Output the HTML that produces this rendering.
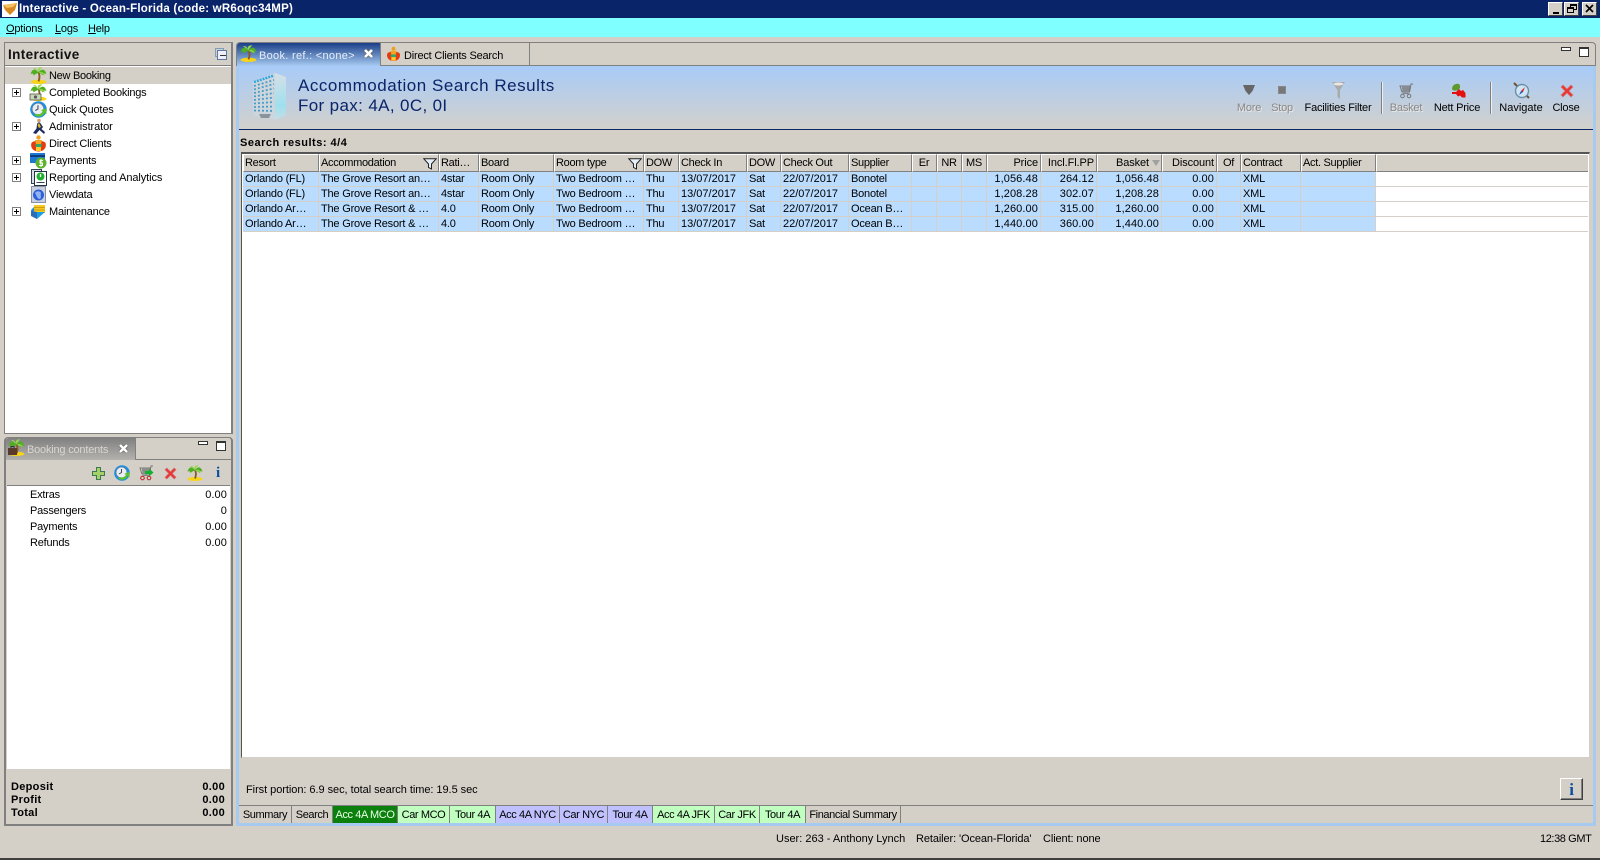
<!DOCTYPE html>
<html><head><meta charset="utf-8"><title>Interactive</title>
<style>
html,body{margin:0;padding:0;width:1600px;height:860px;overflow:hidden;background:#d4d0c8}
body{position:relative;font:11px/13px "Liberation Sans",sans-serif;color:#000}
.a{position:absolute;box-sizing:border-box}
.t{position:absolute;white-space:nowrap;line-height:13px;margin-top:1px;letter-spacing:-.2px}
.v{letter-spacing:.1px}
.bd{font-weight:bold;letter-spacing:.3px}
.r{text-align:right}
.c{text-align:center}
.ico{position:absolute;overflow:visible}
.tab{position:absolute;top:806px;height:17px;line-height:18px;letter-spacing:-.4px;text-align:center;border-right:1px solid #808080;box-sizing:border-box;white-space:nowrap}
.g{background:#c0ffc0}.b{background:#c0c0ff}
.exp{position:absolute;left:12px;width:9px;height:9px;border:1px solid #808080;box-sizing:border-box;background:#fff}
.exp:before{content:"";position:absolute;left:1px;top:3px;width:5px;height:1px;background:#000}
.exp:after{content:"";position:absolute;left:3px;top:1px;width:1px;height:5px;background:#000}
table{border-collapse:separate;border-spacing:0;table-layout:fixed;position:absolute;left:243px;top:154px;width:1133px}
th{height:18px;box-sizing:border-box;padding:1px 2px 0 1px;font-weight:normal;letter-spacing:-.3px;text-align:left;background:#d4d0c8;border-top:1px solid #fff;border-left:1px solid #fff;border-right:1px solid #808080;border-bottom:1px solid #808080;overflow:hidden;white-space:nowrap}
td{height:15px;box-sizing:border-box;padding:1px 2px 0 2px;letter-spacing:-.2px;background:#b9dcff;border-right:1px solid #d4d0c8;border-bottom:1px solid #d4d0c8;overflow:hidden;white-space:nowrap}
td:nth-child(7),td:nth-child(9){letter-spacing:0}
th.n{letter-spacing:-.1px}
td.n{letter-spacing:.1px;text-align:right}
th.n{text-align:right}
</style></head><body>
<svg width="0" height="0" style="position:absolute">
<defs>
<symbol id="palm" viewBox="0 0 16 16"><ellipse cx="8" cy="14" rx="7.500" ry="2" fill="#f7d417"/><path d="M8 13.500C9.500 10 9 7 8 4.500" stroke="#8a5a20" stroke-width="1.800" fill="none"/><path d="M8 5.500C5 .5 1.500 2 .5 7 2 5.500 3 6 3.500 8 5 6.500 6.500 6 8 5.500ZM8 5.500C11 .5 14.500 2 15.500 7 14 5.500 13 6 12.500 8 11 6.500 9.500 6 8 5.500Z" fill="#4fae22"/><path d="M8 5C6.500 1.500 8.500 0 11.500 .5 10 2 9 3 8 5ZM8 5C7 2.500 5.500 .5 3 1 5 2.500 6.500 3.500 8 5ZM8 5.500C11 4 13 5 14 8 12 6.500 10 6 8 5.500Z" fill="#93d84e"/></symbol>
<symbol id="clock" viewBox="0 0 16 16"><circle cx="8" cy="8" r="7.800" fill="#1d8fe0"/><circle cx="7.500" cy="7.500" r="5.400" fill="#e8eef4" stroke="#6a7a90" stroke-width=".6"/><path d="M7.500 4V7.500L5 9" stroke="#445" stroke-width="1" fill="none"/><path d="M4 13C7 16 12 15 13.500 11L15.500 12.500 15.500 7 10.500 8.500 12 10C10.500 12.500 8 13 6 12Z" fill="#5cc02a"/></symbol>
<symbol id="x" viewBox="0 0 14 14"><path d="M3 1 7 5 11 1 13 3 9 7 13 11 11 13 7 9 3 13 1 11 5 7 1 3Z" fill="#ee3333" stroke="#c98080" stroke-width=".7"/></symbol>
<symbol id="funnel" viewBox="0 0 14 12"><path d="M.7.7H13.300L8.500 6V11L5.500 9.500V6Z" fill="#e6f0fa" stroke="#222" stroke-width="1"/></symbol>
<symbol id="cart" viewBox="0 0 16 16"><path d="M15 1H13L11.500 9H4L2 3H13M4 5H13M4.500 7H12.500M5 3V9M7 3V9M9 3V9M11 3V9" stroke="#777" stroke-width="1" fill="none"/><circle cx="4.500" cy="13" r="1.800" fill="none" stroke="#777"/><circle cx="11" cy="13" r="1.800" fill="none" stroke="#777"/><path d="M4.500 11C7 10 9 10 11 11" stroke="#777" fill="none"/></symbol>
<symbol id="tx" viewBox="0 0 11 11"><path d="M2 2 9 9M9 2 2 9" stroke="#666" stroke-width="4"/><path d="M2 2 9 9M9 2 2 9" stroke="#fff" stroke-width="2.600"/></symbol>
<symbol id="client" viewBox="0 0 17 17"><circle cx="8.500" cy="2.500" r="2.200" fill="#f0a020"/><path d="M1.500 8C3 5 14 5 15.500 8 17 12 14 16.500 8.500 16.500 3 16.500 0 12 1.500 8Z" fill="#e83a10"/><path d="M5 5H12L11 9H6Z" fill="#f6a623"/><rect x="5.500" y="9" width="6" height="3" fill="#2fa868"/><rect x="6" y="12" width="5" height="4" fill="#fc3"/></symbol>
<linearGradient id="hs" x1="0" y1="0" x2="0" y2="1"><stop offset="0" stop-color="#d6dfe6"/><stop offset=".7" stop-color="#9ee0ee"/><stop offset="1" stop-color="#c6dde4"/></linearGradient>
</defs>
</svg>

<!-- Title bar -->
<div class="a" style="left:0;top:0;width:1600px;height:18px;background:#0a246a"></div>
<div class="a" style="left:2px;top:1px;width:16px;height:16px;background:#fff"></div>
<svg class="ico" style="left:2px;top:2px" width="16" height="14" viewBox="0 0 16 14"><path d="M1 3 15 1 13 8 8 13 3 8Z" fill="#d88a20"/><path d="M1 3 15 1 11 5 5 6Z" fill="#f4c060"/></svg>
<div class="t" style="left:19px;top:2px;color:#fff;font-weight:bold;font-size:11.500px;letter-spacing:.22px">Interactive - Ocean-Florida (code: wR6oqc34MP)</div>
<div class="a" style="left:1548px;top:2px;width:15px;height:14px;background:#d4d0c8;border:1px solid;border-color:#fff #404040 #404040 #fff"><div class="a" style="left:4px;top:9px;width:6px;height:2px;background:#000"></div></div>
<div class="a" style="left:1564px;top:2px;width:15px;height:14px;background:#d4d0c8;border:1px solid;border-color:#fff #404040 #404040 #fff"><div class="a" style="left:5px;top:1px;width:7px;height:6px;border:1px solid #000;border-top-width:2px"></div><div class="a" style="left:2px;top:4px;width:7px;height:6px;border:1px solid #000;border-top-width:2px;background:#d4d0c8"></div></div>
<div class="a" style="left:1582px;top:2px;width:15px;height:14px;background:#d4d0c8;border:1px solid;border-color:#fff #404040 #404040 #fff"><svg class="ico" style="left:2px;top:1px" width="9" height="9" viewBox="0 0 9 9"><path d="M1 1 8 8M8 1 1 8" stroke="#000" stroke-width="1.700"/></svg></div>

<!-- Menu -->
<div class="a" style="left:0;top:18px;width:1600px;height:19px;background:#7fffff"></div>
<div class="t" style="left:6px;top:22px"><u>O</u>ptions</div>
<div class="t" style="left:55px;top:22px"><u>L</u>ogs</div>
<div class="t" style="left:88px;top:22px"><u>H</u>elp</div>

<!-- Left top panel -->
<div class="a" style="left:4px;top:42px;width:229px;height:392px;background:#fff;border:1px solid #808080;border-width:1px 2px 1px 1px"></div>
<div class="a" style="left:5px;top:43px;width:226px;height:23px;background:#d4d0c8;border-bottom:1px solid #808080"></div>
<div class="t" style="left:8px;top:47px;margin-top:0;font-weight:bold;font-size:13.500px;line-height:16px;color:#111;letter-spacing:.37px">Interactive</div>
<div class="a" style="left:215px;top:48px;width:9px;height:9px;border:1px solid #7f9db9;background:#d4d0c8"></div>
<div class="a" style="left:217px;top:50px;width:10px;height:10px;border:1px solid #5a7aa0;background:#eef"><div class="a" style="left:2px;top:4px;width:6px;height:1px;background:#333"></div></div>
<div class="a" style="left:5px;top:67px;width:226px;height:17px;background:#d4d0c8"></div>

<svg class="ico" style="left:30px;top:67px" width="17" height="17"><use href="#palm"/></svg>
<svg class="ico" style="left:30px;top:84px" width="17" height="17"><use href="#palm"/><rect x="0" y="10" width="11" height="6" fill="#c8d8b0" stroke="#444" stroke-width=".7"/><circle cx="5.500" cy="13" r="1.600" fill="#556"/></svg>
<svg class="ico" style="left:30px;top:101px" width="17" height="17"><use href="#clock"/></svg>
<svg class="ico" style="left:32px;top:118px" width="15" height="17" viewBox="0 0 15 17"><circle cx="7" cy="2.500" r="1.800" fill="#caa070"/><path d="M6 4.500 8 4.500 11 9 9.500 11 13 14 12 16 7.500 12 4 16 1 15 4.500 10.500 5 6Z" fill="#1c2c60"/><path d="M7 5 9 9 7 10 5.500 7Z" fill="#e0c020"/></svg>
<svg class="ico" style="left:30px;top:135px" width="17" height="17"><use href="#client"/></svg>
<svg class="ico" style="left:30px;top:152px" width="17" height="17" viewBox="0 0 17 17"><rect x="0" y="1" width="15" height="10" fill="#1f78d0"/><rect x="0" y="3" width="15" height="2" fill="#0b3e80"/><circle cx="11" cy="11" r="5.500" fill="#5cb52b"/><path d="M13 8.500H10V11H12.500V13.500H9M11 7V15" stroke="#fff" stroke-width="1" fill="none"/></svg>
<svg class="ico" style="left:31px;top:169px" width="16" height="17" viewBox="0 0 16 17"><rect x=".5" y=".5" width="10" height="14" fill="#d8dee8" stroke="#345"/><rect x="3.500" y="2.500" width="12" height="14" fill="#fff" stroke="#234"/><circle cx="9.500" cy="7.500" r="4" fill="#20b030"/><path d="M9.500 5V8" stroke="#fff" stroke-width="1.300"/><path d="M5.500 13.500H13.500" stroke="#345"/></svg>
<svg class="ico" style="left:31px;top:186px" width="15" height="17" viewBox="0 0 15 17"><rect x=".5" y=".5" width="14" height="16" fill="#c8cfe0" stroke="#8890a8"/><circle cx="7.500" cy="9" r="5.500" fill="#2e5fd8"/><path d="M4 7C6 4.500 9 5 10 7 9 9 11 11 9 13 6 13 6 10 4 7Z" fill="#90b4f0"/></svg>
<svg class="ico" style="left:30px;top:203px" width="17" height="17" viewBox="0 0 17 17"><path d="M1 7 5 3H15L13 9 7 15 3 14Z" fill="#1c8ad8"/><path d="M4 2H15V10H4Z" fill="#f4c81c"/><path d="M4 4.500H15M4 7H15" stroke="#c08a10" stroke-width=".8"/><path d="M1 8 7 9V16L1 13Z" fill="#2c6cb8"/><path d="M7 9 15 9 7 16Z" fill="#18a0e0"/></svg>

<div class="t" style="left:49px;top:69px;letter-spacing:-.28px">New Booking</div>
<div class="t" style="left:49px;top:86px;letter-spacing:-.23px">Completed Bookings</div>
<div class="t" style="left:49px;top:103px;letter-spacing:-.17px">Quick Quotes</div>
<div class="t" style="left:49px;top:120px;letter-spacing:-.08px">Administrator</div>
<div class="t" style="left:49px;top:137px">Direct Clients</div>
<div class="t" style="left:49px;top:154px">Payments</div>
<div class="t" style="left:49px;top:171px;letter-spacing:-.1px">Reporting and Analytics</div>
<div class="t" style="left:49px;top:188px">Viewdata</div>
<div class="t" style="left:49px;top:205px">Maintenance</div>
<div class="exp" style="top:88px"></div>
<div class="exp" style="top:122px"></div>
<div class="exp" style="top:156px"></div>
<div class="exp" style="top:173px"></div>
<div class="exp" style="top:207px"></div>

<!-- Booking contents panel -->
<div class="a" style="left:4px;top:437px;width:229px;height:389px;background:#d4d0c8;border:1px solid #808080;border-width:1px 2px 2px 2px;border-radius:4px 4px 0 0"></div>
<div class="a" style="left:6px;top:438px;width:130px;height:22px;background:linear-gradient(#808080,#b4b2ae);border-right:1px solid #808080;border-radius:3px 0 0 0"></div>
<div class="a" style="left:136px;top:459px;width:96px;height:1px;background:#808080"></div>
<svg class="ico" style="left:8px;top:439px" width="17" height="17"><use href="#palm"/><rect x="0" y="9" width="9" height="7" fill="#5a3a2a"/><path d="M3 9V7.500H6V9" stroke="#333" fill="none"/></svg>
<div class="t" style="left:27px;top:443px;color:#d8d6d0">Booking contents</div>
<svg class="ico" style="left:118px;top:443px" width="11" height="11"><use href="#tx"/></svg>
<div class="a" style="left:198px;top:441px;width:10px;height:4px;border:1px solid #333;background:#fff"></div>
<div class="a" style="left:216px;top:441px;width:10px;height:10px;border:1px solid #333;border-top-width:2px;background:#fff"></div>
<div class="a" style="left:7px;top:462px;width:223px;height:24px;background:#d4d0c8;border-bottom:1px solid #808080"></div>
<svg class="ico" style="left:92px;top:467px" width="13" height="13" viewBox="0 0 13 13"><path d="M4.500 .5H8.500V4.500H12.500V8.500H8.500V12.500H4.500V8.500H.5V4.500H4.500Z" fill="#a8d068" stroke="#3a7a50"/></svg>
<svg class="ico" style="left:114px;top:465px" width="16" height="16"><use href="#clock"/></svg>
<svg class="ico" style="left:138px;top:465px" width="16" height="16"><use href="#cart"/><path d="M7 6H11V3.500L15.500 7.500 11 11.500V9H7Z" fill="#10b030"/><circle cx="4.500" cy="13" r="1.800" fill="none" stroke="#d03030"/><circle cx="11" cy="13" r="1.800" fill="none" stroke="#d03030"/></svg>
<svg class="ico" style="left:164px;top:467px" width="13" height="13"><use href="#x"/></svg>
<svg class="ico" style="left:187px;top:465px" width="16" height="16"><use href="#palm"/></svg>
<div class="t" style="left:214px;top:465px;margin-top:0;width:8px;text-align:center;font:bold 15px/16px 'Liberation Serif',serif;color:#0b4fa0">i</div>
<div class="a" style="left:7px;top:486px;width:223px;height:283px;background:#fff"></div>
<div class="t" style="left:30px;top:488px">Extras</div><div class="t r v" style="right:1373px;top:488px">0.00</div>
<div class="t" style="left:30px;top:504px">Passengers</div><div class="t r v" style="right:1373px;top:504px">0</div>
<div class="t" style="left:30px;top:520px">Payments</div><div class="t r v" style="right:1373px;top:520px">0.00</div>
<div class="t" style="left:30px;top:536px">Refunds</div><div class="t r v" style="right:1373px;top:536px">0.00</div>
<div class="t bd" style="left:11px;top:780px">Deposit</div><div class="t r bd" style="right:1375px;top:780px">0.00</div>
<div class="t bd" style="left:11px;top:793px">Profit</div><div class="t r bd" style="right:1375px;top:793px">0.00</div>
<div class="t bd" style="left:11px;top:806px">Total</div><div class="t r bd" style="right:1375px;top:806px">0.00</div>

<!-- Main panel -->
<div class="a" style="left:236px;top:42px;width:1360px;height:784px;background:#d4d0c8;border:1px solid #808080;border-radius:4px 4px 0 0;border-bottom:0"></div>
<div class="a" style="left:236px;top:66px;width:3px;height:760px;background:#a6caf0"></div>
<div class="a" style="left:1593px;top:66px;width:3px;height:760px;background:#a6caf0"></div>
<div class="a" style="left:236px;top:823px;width:1360px;height:3px;background:#a6caf0"></div>
<div class="a" style="left:237px;top:43px;width:144px;height:23px;background:linear-gradient(#1a3f88,#a6caf0);border-right:1px solid #808080;border-radius:3px 0 0 0"></div>
<div class="a" style="left:381px;top:43px;width:149px;height:23px;border-right:1px solid #808080"></div>
<div class="a" style="left:381px;top:65px;width:1214px;height:1px;background:#808080"></div>
<svg class="ico" style="left:240px;top:45px" width="17" height="17"><use href="#palm"/></svg>
<div class="t" style="left:259px;top:49px;color:#e8eef8;letter-spacing:.3px">Book. ref.: &lt;none&gt;</div>
<svg class="ico" style="left:363px;top:48px" width="11" height="11"><use href="#tx"/></svg>
<svg class="ico" style="left:386px;top:46px" width="15" height="16"><use href="#client"/></svg>
<div class="t" style="left:404px;top:49px">Direct Clients Search</div>
<div class="a" style="left:1561px;top:47px;width:10px;height:4px;border:1px solid #333;background:#fff"></div>
<div class="a" style="left:1579px;top:47px;width:10px;height:10px;border:1px solid #333;border-top-width:2px;background:#fff"></div>

<!-- header band -->
<div class="a" style="left:239px;top:66px;width:1354px;height:63px;background:linear-gradient(#a8cbf8,#d2d1cc)"></div>
<div class="a" style="left:239px;top:129px;width:1354px;height:1px;background:#0a246a"></div>
<svg class="ico" style="left:251px;top:73px" width="36" height="48" viewBox="0 0 36 48">
<path d="M2 8 24 0V47L2 42Z" fill="#cdd6dc"/><path d="M24 0 35 4V42L24 47Z" fill="url(#hs)"/>
<path d="M3 9 23 2.500" stroke="#2ea8e4" stroke-width="2.500" stroke-dasharray="2 1"/>
<path d="M3 13 23 7M3 16.500 23 11M3 20 23 15.500M3 23.500 23 20M3 27 23 24.500M3 30.500 23 29M3 34 23 33.500M3 37.500 23 38" stroke="#4a9cc8" stroke-width="1.800" stroke-dasharray="2 2"/>
<path d="M8 41H20L18 45H10Z" fill="#8a949c"/></svg>
<div class="t" style="left:298px;top:75px;font-size:17px;line-height:20px;color:#0a246a;letter-spacing:.53px">Accommodation Search Results</div>
<div class="t" style="left:298px;top:95px;font-size:17px;line-height:20px;color:#0a246a;letter-spacing:.36px">For pax: 4A, 0C, 0I</div>

<svg class="ico" style="left:1243px;top:85px" width="12" height="10" viewBox="0 0 12 10"><path d="M0 0H12L9.500 6 6 10 2.500 6Z" fill="#666"/></svg>
<div class="a" style="left:1278px;top:86px;width:8px;height:8px;background:#777;border:1px solid #888"></div>
<svg class="ico" style="left:1332px;top:82px" width="13" height="17" viewBox="0 0 13 17"><path d="M0 0H13L8 8V17L5.500 15V8Z" fill="#aaa"/><ellipse cx="6.500" cy="2" rx="5" ry="1.500" fill="#e8e8e8"/></svg>
<svg class="ico" style="left:1398px;top:83px" width="16" height="16"><use href="#cart"/></svg>
<svg class="ico" style="left:1450px;top:83px" width="16" height="16" viewBox="0 0 16 16"><path d="M2 6C2 2 6 0 9 1 11 3 10 6 8 7 5 8 3 8 2 6Z" fill="#5c9a30"/><path d="M2 9H6L9 6 11 8 13 7 15.500 10V14.500H12L10 12.500 8 13.500 6 11 2 11Z" fill="#e41010"/></svg>
<svg class="ico" style="left:1513px;top:82px" width="17" height="17" viewBox="0 0 17 17"><circle cx="9" cy="9" r="6.500" fill="#cfe4f4" stroke="#6a90a8" stroke-width="1.400"/><path d="M12 5 8 9 10 10Z" fill="#d02020"/><path d="M6 13 8 9 10 10Z" fill="#2050b0"/><path d="M1 1 4 4M14 14 16 16" stroke="#705030" stroke-width="2"/></svg>
<svg class="ico" style="left:1560px;top:84px" width="14" height="14"><use href="#x"/></svg>

<div class="t c" style="left:1229px;top:101px;width:40px;color:#888;text-shadow:1px 1px #e8e8e8">More</div>
<div class="t c" style="left:1262px;top:101px;width:40px;color:#888;text-shadow:1px 1px #e8e8e8">Stop</div>
<div class="t c" style="left:1298px;top:101px;width:80px">Facilities Filter</div>
<div class="t c" style="left:1386px;top:101px;width:40px;color:#888;text-shadow:1px 1px #e8e8e8">Basket</div>
<div class="t c" style="left:1427px;top:101px;width:60px">Nett Price</div>
<div class="t c" style="left:1491px;top:101px;width:60px;letter-spacing:0">Navigate</div>
<div class="t c" style="left:1546px;top:101px;width:40px">Close</div>
<div class="a" style="left:1381px;top:82px;width:1px;height:32px;background:#808080"></div><div class="a" style="left:1382px;top:82px;width:1px;height:32px;background:#eee"></div>
<div class="a" style="left:1490px;top:82px;width:1px;height:32px;background:#808080"></div><div class="a" style="left:1491px;top:82px;width:1px;height:32px;background:#eee"></div>

<div class="t" style="left:240px;top:136px;font-weight:bold;letter-spacing:.5px">Search results: 4/4</div>

<!-- Grid -->
<div class="a" style="left:241px;top:152px;width:1349px;height:606px;background:#fff;border:solid;border-width:2px 1px 1px 1px;border-color:#555 #d4d0c8 #d4d0c8 #555"></div>
<div class="a" style="left:1376px;top:154px;width:212px;height:18px;background:#d4d0c8;border-left:1px solid #fff;border-top:1px solid #fff;border-bottom:1px solid #808080"></div>
<div class="a" style="left:1376px;top:186px;width:212px;height:1px;background:#d4d0c8"></div>
<div class="a" style="left:1376px;top:201px;width:212px;height:1px;background:#d4d0c8"></div>
<div class="a" style="left:1376px;top:216px;width:212px;height:1px;background:#d4d0c8"></div>
<div class="a" style="left:1376px;top:231px;width:212px;height:1px;background:#d4d0c8"></div>
<table>
<colgroup><col style="width:76px"><col style="width:120px"><col style="width:40px"><col style="width:75px"><col style="width:90px"><col style="width:35px"><col style="width:68px"><col style="width:34px"><col style="width:68px"><col style="width:63px"><col style="width:25px"><col style="width:25px"><col style="width:25px"><col style="width:54px"><col style="width:56px"><col style="width:65px"><col style="width:55px"><col style="width:24px"><col style="width:60px"><col style="width:75px"></colgroup>
<tr><th>Resort</th><th>Accommodation</th><th>Rati…</th><th>Board</th><th>Room type</th><th>DOW</th><th>Check In</th><th>DOW</th><th>Check Out</th><th>Supplier</th><th class="c">Er</th><th class="c">NR</th><th class="c">MS</th><th class="n">Price</th><th class="n">Incl.Fl.PP</th><th class="n" style="padding-right:12px">Basket</th><th class="n">Discount</th><th class="c">Of</th><th>Contract</th><th>Act. Supplier</th></tr>
<tr><td>Orlando (FL)</td><td>The Grove Resort an…</td><td>4star</td><td>Room Only</td><td>Two Bedroom …</td><td>Thu</td><td>13/07/2017</td><td>Sat</td><td>22/07/2017</td><td>Bonotel</td><td></td><td></td><td></td><td class="n">1,056.48</td><td class="n">264.12</td><td class="n">1,056.48</td><td class="n">0.00</td><td></td><td>XML</td><td></td></tr>
<tr><td>Orlando (FL)</td><td>The Grove Resort an…</td><td>4star</td><td>Room Only</td><td>Two Bedroom …</td><td>Thu</td><td>13/07/2017</td><td>Sat</td><td>22/07/2017</td><td>Bonotel</td><td></td><td></td><td></td><td class="n">1,208.28</td><td class="n">302.07</td><td class="n">1,208.28</td><td class="n">0.00</td><td></td><td>XML</td><td></td></tr>
<tr><td>Orlando Ar…</td><td>The Grove Resort &amp; …</td><td>4.0</td><td>Room Only</td><td>Two Bedroom …</td><td>Thu</td><td>13/07/2017</td><td>Sat</td><td>22/07/2017</td><td>Ocean B…</td><td></td><td></td><td></td><td class="n">1,260.00</td><td class="n">315.00</td><td class="n">1,260.00</td><td class="n">0.00</td><td></td><td>XML</td><td></td></tr>
<tr><td>Orlando Ar…</td><td>The Grove Resort &amp; …</td><td>4.0</td><td>Room Only</td><td>Two Bedroom …</td><td>Thu</td><td>13/07/2017</td><td>Sat</td><td>22/07/2017</td><td>Ocean B…</td><td></td><td></td><td></td><td class="n">1,440.00</td><td class="n">360.00</td><td class="n">1,440.00</td><td class="n">0.00</td><td></td><td>XML</td><td></td></tr>
</table>
<svg class="ico" style="left:423px;top:158px" width="14" height="12"><use href="#funnel"/></svg>
<svg class="ico" style="left:628px;top:158px" width="14" height="12"><use href="#funnel"/></svg>
<svg class="ico" style="left:1152px;top:160px" width="8" height="6"><path d="M0 0H8L4 6Z" fill="#a0a0a0"/></svg>

<div class="t" style="left:246px;top:783px;letter-spacing:-.05px">First portion: 6.9 sec, total search time: 19.5 sec</div>
<div class="a" style="left:1560px;top:778px;width:23px;height:22px;background:#d4d0c8;border:1px solid;border-color:#fff #404040 #404040 #fff;box-shadow:inset -1px -1px #808080"></div>
<div class="t c" style="left:1560px;top:781px;margin-top:0;width:23px;font:bold 17px/17px 'Liberation Serif',serif;color:#0b4fa0">i</div>

<!-- Bottom tabs -->
<div class="a" style="left:239px;top:805px;width:1354px;height:1px;background:#808080"></div>
<div class="tab" style="left:239px;width:53px">Summary</div>
<div class="tab" style="left:292px;width:41px">Search</div>
<div class="tab" style="left:333px;width:65px;background:#0c800c;color:#e8ffe8">Acc 4A MCO</div>
<div class="tab g" style="left:398px;width:52px">Car MCO</div>
<div class="tab g" style="left:450px;width:46px">Tour 4A</div>
<div class="tab b" style="left:496px;width:64px">Acc 4A NYC</div>
<div class="tab b" style="left:560px;width:48px">Car NYC</div>
<div class="tab b" style="left:608px;width:45px">Tour 4A</div>
<div class="tab g" style="left:653px;width:62px">Acc 4A JFK</div>
<div class="tab g" style="left:715px;width:45px">Car JFK</div>
<div class="tab g" style="left:760px;width:46px">Tour 4A</div>
<div class="tab" style="left:806px;width:95px">Financial Summary</div>

<!-- Status bar -->
<div class="t" style="left:776px;top:832px;letter-spacing:0">User: 263 - Anthony Lynch</div>
<div class="t" style="left:916px;top:832px;letter-spacing:-.1px">Retailer: 'Ocean-Florida'</div>
<div class="t" style="left:1043px;top:832px;letter-spacing:-.1px">Client: none</div>
<div class="t" style="left:1540px;top:832px;letter-spacing:-.4px">12:38 GMT</div>
<div class="a" style="left:0;top:858px;width:1600px;height:2px;background:#404040"></div>
</body></html>
